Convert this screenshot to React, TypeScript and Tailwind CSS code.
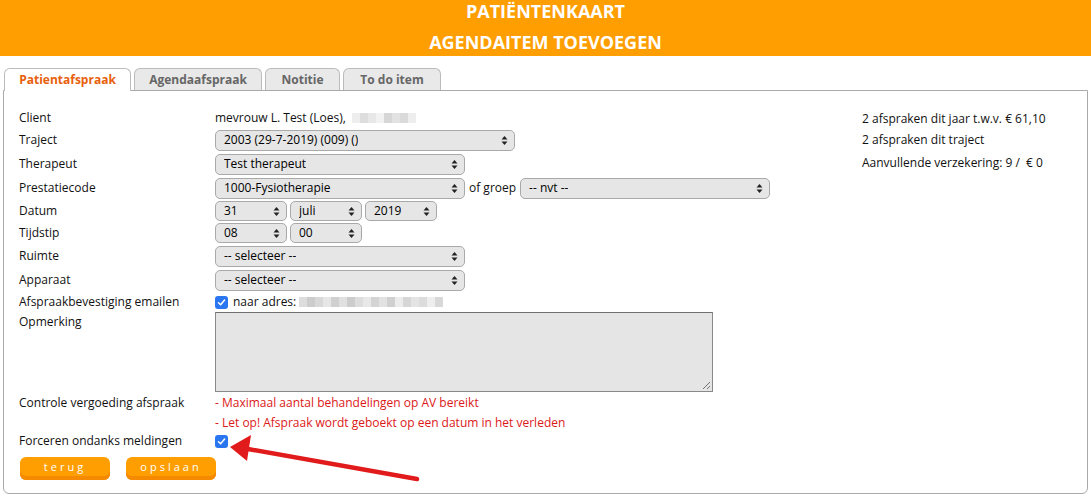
import React from 'react';

const font = { fontFamily: '"Open Sans", "Liberation Sans", sans-serif' };

function Arrows() {
    return (
        <svg width="7" height="11" viewBox="0 0 7 11" className="shrink-0">
            <path d="M3.5 1 L6.5 4.5 L0.5 4.5 Z" fill="#222" />
            <path d="M3.5 10 L6.5 6.5 L0.5 6.5 Z" fill="#222" />
        </svg>
    );
}

function Select({ value, w, h = 'h-[21px]' }: { value: string; w: string; h?: string }) {
    return (
        <div className={`${w} ${h} flex items-center justify-between rounded-[5px] border border-[#a9a9a9] bg-[#e6e6e6] pl-[8px] pr-[6px] text-[12px] text-black shrink-0`}>
            <span className="truncate">{value}</span>
            <Arrows />
        </div>
    );
}

function Check() {
    return (
        <div className="w-[13px] h-[13px] rounded-[3px] bg-[#2a76f0] flex items-center justify-center shrink-0">
            <svg width="9" height="9" viewBox="0 0 9 9">
                <path d="M1.5 4.8 L3.6 6.8 L7.6 2" stroke="white" strokeWidth="1.5" fill="none" strokeLinecap="round" strokeLinejoin="round" />
            </svg>
        </div>
    );
}

// pixelated placeholder for the blurred-out personal data
function Blur({ shades }: { shades: string[] }) {
    return (
        <div className="flex h-[10px]">
            {shades.map((c, i) => (
                <div key={i} className={`w-[8px] h-full ${c}`} />
            ))}
        </div>
    );
}

function Row({ label, children, h = 'h-[24px]' }: { label: string; children?: React.ReactNode; h?: string }) {
    return (
        <div className={`flex items-center ${h}`}>
            <div className="w-[196px] shrink-0">{label}</div>
            <div className="flex items-center gap-[3px]">{children}</div>
        </div>
    );
}

export default function App() {
    const tabs = ['Patientafspraak', 'Agendaafspraak', 'Notitie', 'To do item'];
    const tabW = ['w-[127px]', 'w-[128px]', 'w-[75px]', 'w-[98px]'];

    return (
        <div className="relative w-[1091px] h-[497px] bg-white text-[12px] text-[#111]" style={font}>
            <div className="h-[56px] bg-[#ff9e00] text-white font-bold text-[18px] flex flex-col items-center">
                <div className="h-[23px] flex items-center">PATIËNTENKAART</div>
                <div className="h-[24px] mt-[7px] flex items-center">AGENDAITEM TOEVOEGEN</div>
            </div>

            <div className="flex gap-[3px] pl-[4px] mt-[12px] h-[22px] items-end">
                {tabs.map((t, i) => (
                    <div
                        key={t}
                        className={`${tabW[i]} h-[22px] rounded-t-[6px] border border-b-0 border-[#bbbbbb] flex items-center justify-center font-bold text-[12px] ${
                            i === 0 ? 'bg-white text-[#e8600c] h-[23px] -mb-[1px] relative z-10' : 'bg-[#e9e9e9] text-[#666]'
                        }`}
                    >
                        {t}
                    </div>
                ))}
            </div>

            <div className="mx-[3px] h-[404px] border border-[#aaaaaa] rounded-b-[6px] pl-[15px] pt-[17px] flex">
                <div className="w-[843px] shrink-0">
                    <Row label="Client" h="h-[20px]">
                        <span>mevrouw L. Test (Loes),</span>
                        <div className="ml-[3px]">
                            <Blur shades={['bg-[#eee]', 'bg-[#ddd]', 'bg-[#e8e8e8]', 'bg-[#f2f2f2]', 'bg-[#d6d6d6]', 'bg-[#e2e2e2]', 'bg-[#dadada]', 'bg-[#eee]']} />
                        </div>
                    </Row>
                    <Row label="Traject">
                        <Select value="2003 (29-7-2019) (009) ()" w="w-[300px]" />
                    </Row>
                    <Row label="Therapeut">
                        <Select value="Test therapeut" w="w-[250px]" />
                    </Row>
                    <Row label="Prestatiecode">
                        <Select value="1000-Fysiotherapie" w="w-[250px]" />
                        <span className="mx-[1px]">of groep</span>
                        <Select value="-- nvt --" w="w-[250px]" />
                    </Row>
                    <Row label="Datum" h="h-[22px]">
                        <Select value="31" w="w-[72px]" h="h-[20px]" />
                        <Select value="juli" w="w-[72px]" h="h-[20px]" />
                        <Select value="2019" w="w-[72px]" h="h-[20px]" />
                    </Row>
                    <Row label="Tijdstip" h="h-[22px]">
                        <Select value="08" w="w-[72px]" h="h-[20px]" />
                        <Select value="00" w="w-[72px]" h="h-[20px]" />
                    </Row>
                    <Row label="Ruimte">
                        <Select value="-- selecteer --" w="w-[250px]" />
                    </Row>
                    <Row label="Apparaat">
                        <Select value="-- selecteer --" w="w-[250px]" />
                    </Row>
                    <Row label="Afspraakbevestiging emailen" h="h-[20px]">
                        <Check />
                        <span className="ml-[2px]">naar adres:</span>
                        <div className="flex flex-col">
                            <Blur shades={['bg-[#ddd]', 'bg-[#ccc]', 'bg-[#d8d8d8]', 'bg-[#e6e6e6]', 'bg-[#d0d0d0]', 'bg-[#e0e0e0]', 'bg-[#ccc]', 'bg-[#ddd]', 'bg-[#e8e8e8]', 'bg-[#d4d4d4]', 'bg-[#e2e2e2]', 'bg-[#d0d0d0]', 'bg-[#ececec]', 'bg-[#d6d6d6]', 'bg-[#e4e4e4]', 'bg-[#dcdcdc]', 'bg-[#eee]', 'bg-[#d8d8d8]']} />
                        </div>
                    </Row>
                    <div className="flex">
                        <div className="w-[196px] shrink-0 pt-[1px]">Opmerking</div>
                        <div className="relative w-[498px] h-[80px] bg-[#e5e5e5] border border-[#8a8a8a] border-t-[#707070]">
                            <svg width="10" height="10" viewBox="0 0 10 10" className="absolute right-[1px] bottom-[1px]">
                                <path d="M9 2 L2 9 M9 6 L6 9" stroke="#555" strokeWidth="0.8" />
                            </svg>
                        </div>
                    </div>
                    <div className="flex mt-[1px]">
                        <div className="w-[196px] shrink-0 h-[20px] flex items-center">Controle vergoeding afspraak</div>
                        <div className="text-[#dc1818] leading-[20px]">- Maximaal aantal behandelingen op AV bereikt</div>
                    </div>
                    <div className="flex">
                        <div className="w-[196px] shrink-0" />
                        <div className="text-[#dc1818] leading-[20px]">- Let op! Afspraak wordt geboekt op een datum in het verleden</div>
                    </div>
                    <Row label="Forceren ondanks meldingen" h="h-[16px]">
                        <Check />
                    </Row>
                    <div className="flex gap-[16px] mt-[8px] pl-[1px]">
                        {['terug', 'opslaan'].map((b) => (
                            <div
                                key={b}
                                className="w-[90px] h-[23px] rounded-[6px] bg-[#ff9e00] shadow-[inset_0_-4px_0_#f58a00] flex items-center justify-center text-white text-[11px] font-medium tracking-[3px] pb-[2px]"
                            >
                                {b}
                            </div>
                        ))}
                    </div>
                </div>
                <div className="flex flex-col pt-[1px]">
                    <div className="h-[20px] flex items-center">2 afspraken dit jaar t.w.v. € 61,10</div>
                    <div className="h-[22px] flex items-center">2 afspraken dit traject</div>
                    <div className="h-[24px] flex items-center">Aanvullende verzekering: 9 /&nbsp; € 0</div>
                </div>
            </div>

            <svg className="absolute left-0 top-0 pointer-events-none" width="1091" height="497">
                <line x1="248" y1="449" x2="417" y2="479" stroke="#e11b1b" strokeWidth="4.5" strokeLinecap="round" />
                <polygon points="230,447 251,435 247,461" fill="#e11b1b" />
            </svg>
        </div>
    );
}
